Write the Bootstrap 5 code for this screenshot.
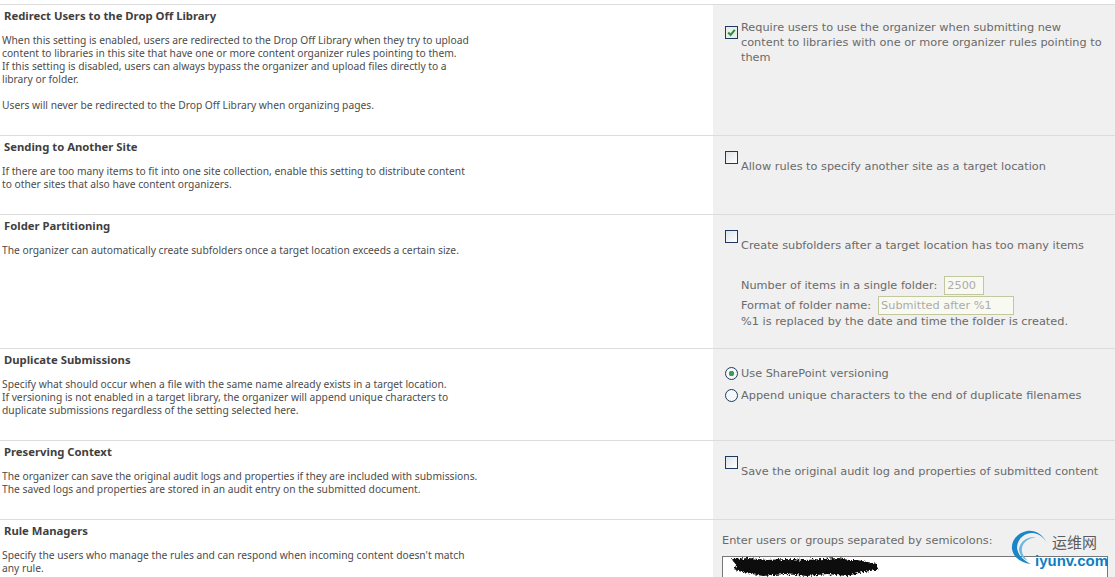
<!DOCTYPE html>
<html lang="en"><head><meta charset="utf-8"><title>Content Organizer Settings</title>
<link href="https://cdn.jsdelivr.net/npm/bootstrap@5.3.0/dist/css/bootstrap.min.css" rel="stylesheet">
<style>
html,body{height:577px;overflow:hidden;background:#fff}
.sheet{padding-top:4px;position:relative;height:577px;overflow:hidden}
.sect{display:flex;border-top:1px solid #dcdcdc}
.h-a{height:131px}.h-b{height:79px}.h-c{height:134px}.h-d{height:92px}.h-e{height:79px}.h-f{height:60px}
.lft{width:713px;flex:none;padding:4px 0 0 2px;font:10.25px/13px "Noto Sans",sans-serif;color:#4c4c4c}
.lft h3{font:bold 11.3px/13px "Noto Sans",sans-serif;color:#3f3f3f;margin:0 0 12px 2px}
.lft p{margin:0}
.rgt{flex:1;background:#f0f0f0;padding:15px 0 0 12px;font:11.3px/15px "DejaVu Sans",sans-serif;color:#6a6a6a;position:relative}
.opt{display:flex;align-items:flex-start;gap:3px}
.opt input{appearance:none;flex:none;width:13px;height:13px;margin:0;background:linear-gradient(135deg,#dfe3e6,#fff);border:1px solid #1e3a5c;border-radius:0}
.opt input:checked{margin-top:6px;background:#e8efe8 url("data:image/svg+xml,%3Csvg xmlns='http://www.w3.org/2000/svg' viewBox='0 0 11 11'%3E%3Cpath d='M2.2 5.5 4.6 8 8.8 2.8' fill='none' stroke='%232f8f3f' stroke-width='2'/%3E%3C/svg%3E") center/11px no-repeat}
.opt input[type=radio]{border-radius:50%;background:#f6f7f8;margin-top:1px}
.opt input[type=radio]:checked{margin-top:1px;background:radial-gradient(circle,#3f9a55 0 2.5px,#f6f7f8 3px)}
.low .opt span{margin-top:8px}
.rad{padding-top:17px}
.folder{margin:22px 0 0 16px}
.folder div{height:20px;display:flex;align-items:center;gap:7px}
.folder div:last-child{height:14px;margin-top:-1px}
.fld{font:11.3px/15px "DejaVu Sans",sans-serif;color:#ababab;background:#f8f9f1;border:1px solid #c3c79f;height:19px;padding:0 2px;border-radius:0}
.fld-s{width:40px}.fld-l{width:136px}
.gap-opt{margin-top:7px}
.mgr{padding:13px 0 0 9px}
.pkr{position:absolute;left:9px;top:36px;width:386px;height:30px;background:#fff;border:1px solid #777}
.blot{display:block;margin-left:2px}
.wm{position:absolute;left:1005px;top:522px;width:110px;height:55px;pointer-events:none}
.wm svg{display:block}
.wm-a{position:absolute;left:47px;top:11px;font:15px/18px "Noto Sans CJK SC",sans-serif;color:#5c5c5c;white-space:nowrap}
.wm-b{position:absolute;left:30px;top:30px;font:bold 15px/18px "Liberation Sans",sans-serif;color:#0c7fc2;white-space:nowrap}
</style></head><body>
<div class="sheet">
<section class="sect h-a">
<div class="lft"><h3>Redirect Users to the Drop Off Library</h3>
<p>When this setting is enabled, users are redirected to the Drop Off Library when they try to upload<br>content to libraries in this site that have one or more content organizer rules pointing to them.<br>If this setting is disabled, users can always bypass the organizer and upload files directly to a<br>library or folder.<br><br>Users will never be redirected to the Drop Off Library when organizing pages.</p></div>
<div class="rgt"><label class="opt"><input type="checkbox" checked><span>Require users to use the organizer when submitting new<br>content to libraries with one or more organizer rules pointing to<br>them</span></label></div>
</section>
<section class="sect h-b">
<div class="lft"><h3>Sending to Another Site</h3>
<p>If there are too many items to fit into one site collection, enable this setting to distribute content<br>to other sites that also have content organizers.</p></div>
<div class="rgt low"><label class="opt"><input type="checkbox"><span>Allow rules to specify another site as a target location</span></label></div>
</section>
<section class="sect h-c">
<div class="lft"><h3>Folder Partitioning</h3>
<p>The organizer can automatically create subfolders once a target location exceeds a certain size.</p></div>
<div class="rgt low"><label class="opt"><input type="checkbox"><span>Create subfolders after a target location has too many items</span></label>
<div class="folder">
<div>Number of items in a single folder: <input class="fld fld-s" value="2500" disabled></div>
<div>Format of folder name: <input class="fld fld-l" value="Submitted after %1" disabled></div>
<div>%1 is replaced by the date and time the folder is created.</div>
</div></div>
</section>
<section class="sect h-d">
<div class="lft"><h3>Duplicate Submissions</h3>
<p>Specify what should occur when a file with the same name already exists in a target location.<br>If versioning is not enabled in a target library, the organizer will append unique characters to<br>duplicate submissions regardless of the setting selected here.</p></div>
<div class="rgt rad"><label class="opt"><input type="radio" name="dup" checked><span>Use SharePoint versioning</span></label>
<label class="opt gap-opt"><input type="radio" name="dup"><span>Append unique characters to the end of duplicate filenames</span></label></div>
</section>
<section class="sect h-e">
<div class="lft"><h3>Preserving Context</h3>
<p>The organizer can save the original audit logs and properties if they are included with submissions.<br>The saved logs and properties are stored in an audit entry on the submitted document.</p></div>
<div class="rgt low"><label class="opt"><input type="checkbox"><span>Save the original audit log and properties of submitted content</span></label></div>
</section>
<section class="sect h-f">
<div class="lft"><h3>Rule Managers</h3>
<p>Specify the users who manage the rules and can respond when incoming content doesn't match<br>any rule.</p></div>
<div class="rgt mgr">Enter users or groups separated by semicolons:
<div class="pkr"><svg class="blot" width="158" height="20" viewBox="0 0 158 20"><defs><filter id="grain" x="-5%" y="-30%" width="110%" height="160%"><feTurbulence type="fractalNoise" baseFrequency=".55" numOctaves="2" seed="4"/><feDisplacementMap in="SourceGraphic" scale="6"/></filter></defs><path d="M7 2 24 1 42 3 62 2 80 3 98 2 114 1 124 3 132 3 153 7 152 13 138 15 122 19 102 17 82 19 60 17 38 19 22 16 9 13 11 8Z" fill="#0a0a0a" filter="url(#grain)"/></svg></div></div>
</section>
<div class="wm">
<svg width="56" height="50" viewBox="0 0 56 50"><path d="M43 23C38 12 30 8 22 9 11 11 6 20 7 27 8 35 16 41 26 42 18 38 12 32 12 25 13 16 20 11 27 11 34 11 40 16 43 23Z" fill="#1a86c8"/><path d="M32 16C24 13 15 19 14 27 14 32 18 37 23 39 19 35 16 31 17 26 18 20 25 15 32 16Z" fill="#6fb6de"/></svg>
<span class="wm-a">运维网</span><span class="wm-b">iyunv.com</span>
</div>
</div>
</body></html>
